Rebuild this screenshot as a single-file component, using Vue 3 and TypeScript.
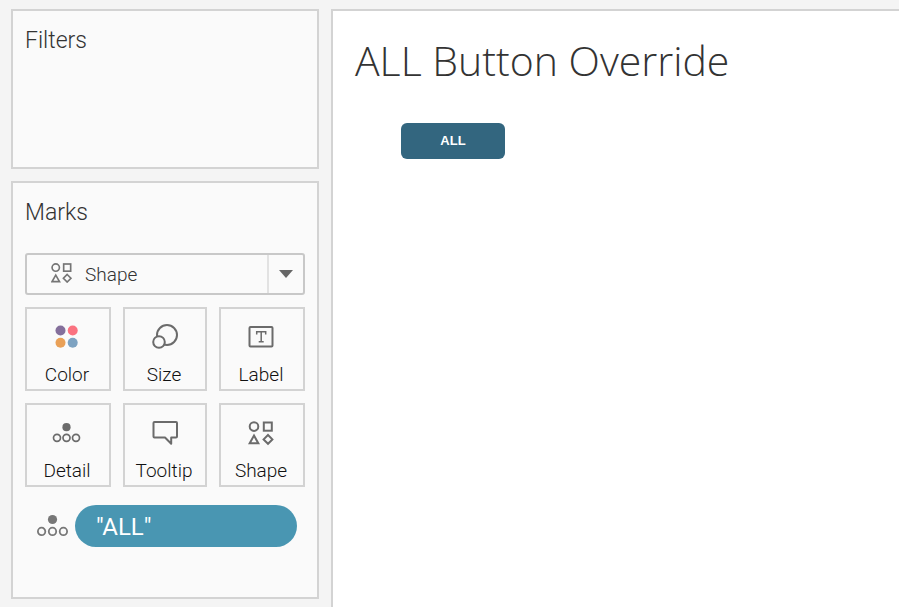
<script setup lang="ts">
import { ref } from 'vue'

type IconName = 'color' | 'size' | 'label' | 'detail' | 'tooltip' | 'shape'

interface MarkCard {
  icon: IconName
  label: string
}

const cards: MarkCard[] = [
  { icon: 'color', label: 'Color' },
  { icon: 'size', label: 'Size' },
  { icon: 'label', label: 'Label' },
  { icon: 'detail', label: 'Detail' },
  { icon: 'tooltip', label: 'Tooltip' },
  { icon: 'shape', label: 'Shape' },
]

const markType = ref('Shape')
</script>

<template>
  <div class="workspace">
    <aside class="shelves">
      <section class="shelf filters">
        <h2>Filters</h2>
      </section>

      <section class="shelf marks">
        <h2>Marks</h2>

        <div class="mark-type">
          <svg class="type-icon" viewBox="0 0 26 24" aria-hidden="true">
            <g fill="none" stroke="currentColor" stroke-width="2">
              <circle cx="5.5" cy="5.5" r="4.4" />
              <rect x="15" y="1.2" width="8.4" height="8.6" />
              <path d="M5.5 14.6 10 22.4H1Z" />
              <path d="M19.2 13.8 23.7 18.3 19.2 22.8 14.7 18.3Z" />
            </g>
          </svg>
          <select v-model="markType" aria-label="Mark type">
            <option>Shape</option>
          </select>
          <span class="arrow-cell" aria-hidden="true">
            <svg viewBox="0 0 14 8"><path d="M0 0H14L7 8Z" fill="#666" /></svg>
          </span>
        </div>

        <div class="cards">
          <button v-for="card in cards" :key="card.label" type="button" class="card">
            <svg class="card-icon" viewBox="0 0 30 30" aria-hidden="true">
              <g v-if="card.icon === 'color'">
                <circle cx="8.5" cy="8.5" r="5" fill="#846f9b" />
                <circle cx="20.7" cy="8.5" r="5" fill="#fa7280" />
                <circle cx="8.5" cy="20.8" r="5" fill="#e9a057" />
                <circle cx="20.7" cy="20.8" r="5" fill="#7da2c1" />
              </g>
              <g v-else-if="card.icon === 'size'" fill="none" stroke="currentColor" stroke-width="2">
                <circle cx="18" cy="13" r="10" />
                <circle cx="10" cy="20" r="5.8" fill="#fafafa" />
              </g>
              <g v-else-if="card.icon === 'label'">
                <rect x="3.5" y="5" width="23" height="19.6" rx="1" fill="none" stroke="currentColor" stroke-width="2" />
                <path
                  d="M10.7 12.4V9.8H19.7V12.4M15.2 9.8V19.6M12.7 19.7H17.7"
                  fill="none"
                  stroke="currentColor"
                  stroke-width="1.5"
                />
              </g>
              <g v-else-if="card.icon === 'detail'" fill="none" stroke="currentColor" stroke-width="1.7">
                <circle cx="14.5" cy="9.2" r="4.1" fill="currentColor" stroke="none" />
                <circle cx="5" cy="19.8" r="3.5" />
                <circle cx="14.5" cy="19.8" r="3.5" />
                <circle cx="24" cy="19.8" r="3.5" />
              </g>
              <g v-else-if="card.icon === 'tooltip'" fill="none" stroke="currentColor" stroke-width="2">
                <path
                  d="M5.5 4H27Q28 4 28 5V18.5Q28 19.5 27 19.5H22.2V25.7L16 19.5H5.5Q4.5 19.5 4.5 18.5V5Q4.5 4 5.5 4Z"
                  stroke-linejoin="round"
                />
              </g>
              <g v-else fill="none" stroke="currentColor" stroke-width="2">
                <circle cx="8" cy="8.6" r="4.3" />
                <rect x="17.8" y="4.5" width="8" height="8.2" />
                <path d="M8 17.6 12.3 25.2H3.7Z" />
                <path d="M22 17 26.4 21.4 22 25.8 17.6 21.4Z" />
              </g>
            </svg>
            <span>{{ card.label }}</span>
          </button>
        </div>

        <div class="pill-row">
          <svg class="pill-icon" viewBox="0 0 32 24" aria-hidden="true">
            <circle cx="15.5" cy="5.5" r="4.6" fill="currentColor" />
            <g fill="none" stroke="currentColor" stroke-width="1.8">
              <circle cx="4.6" cy="17.4" r="3.7" />
              <circle cx="15.5" cy="17.4" r="3.7" />
              <circle cx="26.4" cy="17.4" r="3.7" />
            </g>
          </svg>
          <button type="button" class="pill">"ALL"</button>
        </div>
      </section>
    </aside>

    <main class="sheet">
      <h1>ALL Button Override</h1>
      <button type="button" class="all-button">ALL</button>
    </main>
  </div>
</template>

<style>
body {
  margin: 0;
  background: #f4f4f4;
}
</style>

<style scoped>
* {
  box-sizing: border-box;
}

.workspace {
  display: flex;
  gap: 12px;
  min-height: 100vh;
  padding: 9px 0 0 11px;
  font-family: Roboto, "Liberation Sans", sans-serif;
  font-weight: 300;
  color: #333;
}

.shelves {
  display: flex;
  flex: 0 0 308px;
  flex-direction: column;
  gap: 12px;
  padding-bottom: 8px;
}

.shelf {
  padding: 12px;
  border: 2px solid #d3d3d3;
  background: #fafafa;
}

.filters {
  min-height: 160px;
}

.marks {
  flex: 1;
}

h2 {
  margin: 0;
  font-size: 23px;
  font-weight: 300;
  line-height: 36px;
}

.mark-type {
  position: relative;
  height: 42px;
  margin-top: 22px;
}

.mark-type select {
  width: 100%;
  height: 100%;
  padding: 0 48px 0 58px;
  appearance: none;
  border: 2px solid #c8c8c8;
  border-radius: 3px;
  background: #fafafa;
  color: #333;
  font: inherit;
  font-size: 19px;
}

.type-icon {
  position: absolute;
  top: 10px;
  left: 26px;
  width: 22px;
  height: 20px;
  color: #757575;
  pointer-events: none;
}

.arrow-cell {
  position: absolute;
  top: 2px;
  right: 2px;
  bottom: 2px;
  display: flex;
  align-items: center;
  justify-content: center;
  width: 36px;
  border-left: 2px solid #e2e2e2;
  pointer-events: none;
}

.arrow-cell svg {
  width: 14px;
  height: 8px;
}

.cards {
  display: grid;
  grid-template-columns: 86fr 84fr 86fr;
  gap: 12px;
  margin-top: 12px;
}

.card {
  display: flex;
  flex-direction: column;
  align-items: center;
  height: 84px;
  padding: 13px 2px 0 0;
  border: 2px solid #d3d3d3;
  background: #fafafa;
  color: #111;
  font: inherit;
  font-size: 19px;
  line-height: 24px;
}

.card-icon {
  width: 30px;
  height: 30px;
  margin-bottom: 11px;
  color: #6b6b6b;
}

.pill-row {
  display: flex;
  align-items: center;
  gap: 6px;
  margin-top: 18px;
  padding: 0 8px 0 12px;
}

.pill-icon {
  flex: none;
  width: 32px;
  height: 24px;
  color: #777;
}

.pill {
  flex: 1;
  height: 42px;
  padding: 2px 21px 0;
  border: 0;
  border-radius: 21px;
  background: #4996b2;
  color: #fff;
  font: inherit;
  font-size: 24px;
  font-weight: 400;
  text-align: left;
}

.sheet {
  flex: 1;
  padding: 24px 22px;
  border: 2px solid #d3d3d3;
  border-width: 2px 0 0 2px;
  background: #fff;
}

h1 {
  margin: 0;
  font-family: "Open Sans", "Noto Sans", sans-serif;
  font-size: 41px;
  font-weight: 300;
  line-height: 50px;
}

.all-button {
  display: block;
  width: 104px;
  height: 36px;
  margin: 38px 0 0 46px;
  padding: 0 0 2px;
  border: 0;
  border-radius: 6px;
  background: #33667f;
  color: #fff;
  font-family: "Liberation Sans", Arial, sans-serif;
  font-size: 13px;
  font-weight: 700;
}
</style>
